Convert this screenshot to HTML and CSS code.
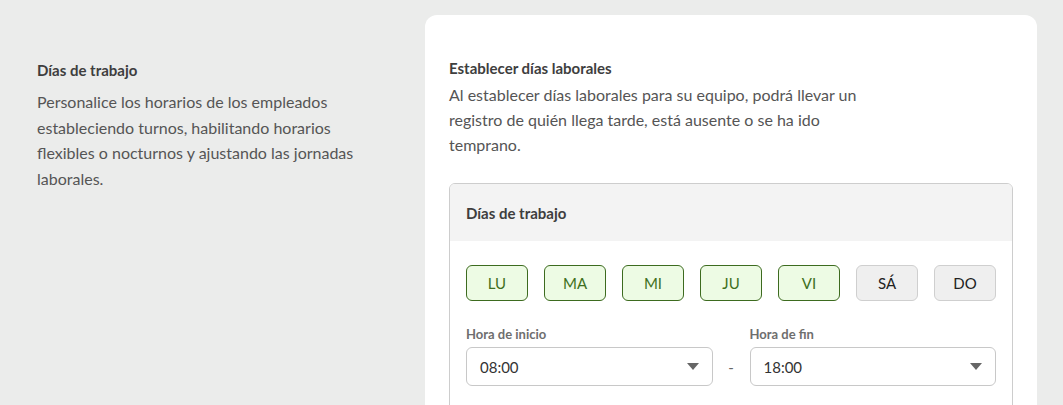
FILE: index.html
```html
<!DOCTYPE html>
<html lang="es">
<head>
<meta charset="utf-8">
<link rel="stylesheet" href="styles.css">
</head>
<body>
<div class="page">
  <section class="intro">
    <h2 class="intro-title">Días de trabajo</h2>
    <p class="intro-text">Personalice los horarios de los empleados estableciendo turnos, habilitando horarios flexibles o nocturnos y ajustando las jornadas laborales.</p>
  </section>
  <section class="card">
    <h3 class="card-title">Establecer días laborales</h3>
    <p class="card-text">Al establecer días laborales para su equipo, podrá llevar un registro de quién llega tarde, está ausente o se ha ido temprano.</p>
    <div class="box">
      <div class="box-head">Días de trabajo</div>
      <div class="box-body">
        <div class="days">
          <button class="day on">LU</button>
          <button class="day on">MA</button>
          <button class="day on">MI</button>
          <button class="day on">JU</button>
          <button class="day on">VI</button>
          <button class="day">SÁ</button>
          <button class="day">DO</button>
        </div>
        <div class="times">
          <label class="lbl">Hora de inicio</label>
          <span></span>
          <label class="lbl">Hora de fin</label>
          <div class="select"><span>08:00</span><i class="caret"></i></div>
          <span class="dash">-</span>
          <div class="select"><span>18:00</span><i class="caret"></i></div>
        </div>
      </div>
    </div>
  </section>
</div>
</body>
</html>
```
FILE: styles.css
```css
* { box-sizing: border-box; }
html, body { margin: 0; height: 100%; }
body {
  background: #ebeceb;
  font-family: "Source Sans Pro", Lato, "Noto Sans", sans-serif;
  color: #555;
  overflow: hidden;
}
.page {
  display: flex;
  padding-top: 15px;
}
.intro {
  width: 425px;
  padding: 43px 40px 0 37px;
}
.intro-title, .card-title {
  margin: 0;
  font-size: 15px;
  font-weight: 700;
  line-height: 24px;
  color: #3e3e3e;
}
.intro-text {
  margin: 7px 0 0;
  font-size: 16px;
  line-height: 25.5px;
  color: #555;
}
.card {
  width: 612px;
  height: 390px;
  background: #fff;
  border-radius: 12px 12px 0 0;
  padding: 41px 24px 0;
  overflow: hidden;
}
.card-text {
  margin: 2px 0 0;
  max-width: 412px;
  font-size: 16px;
  line-height: 25px;
  color: #555;
}
.box {
  margin-top: 26px;
  border: 1px solid #cdcdcd;
  border-radius: 6px;
  overflow: hidden;
}
.box-head {
  height: 57px;
  background: #f3f3f3;
  padding: 0 16px;
  display: flex;
  align-items: center;
  font-size: 15px;
  font-weight: 700;
  color: #3e3e3e;
}
.box-body {
  padding: 24px 16px 30px;
}
.days {
  display: flex;
  gap: 16px;
}
.day {
  width: 62px;
  height: 36px;
  border: 1px solid #cfcfcf;
  border-radius: 6px;
  background: #efefef;
  font-family: inherit;
  font-size: 15px;
  color: #222;
  padding: 0;
}
.day.on {
  background: #edfbe4;
  border-color: #3d6b1f;
  color: #3f7021;
}
.times {
  margin-top: 24px;
  display: grid;
  grid-template-columns: 1fr 37px 1fr;
  row-gap: 4px;
  align-items: center;
}
.lbl {
  font-size: 13px;
  font-weight: 700;
  line-height: 18px;
  color: #6e6e6e;
}
.select {
  height: 39px;
  border: 1px solid #c8c8c8;
  border-radius: 6px;
  display: flex;
  align-items: center;
  justify-content: space-between;
  padding: 0 13px 0 13px;
  font-size: 15px;
  color: #333;
}
.caret {
  width: 0;
  height: 0;
  border-left: 6px solid transparent;
  border-right: 6px solid transparent;
  border-top: 7px solid #666;
}
.dash {
  text-align: center;
  font-size: 15px;
  color: #666;
}
```
